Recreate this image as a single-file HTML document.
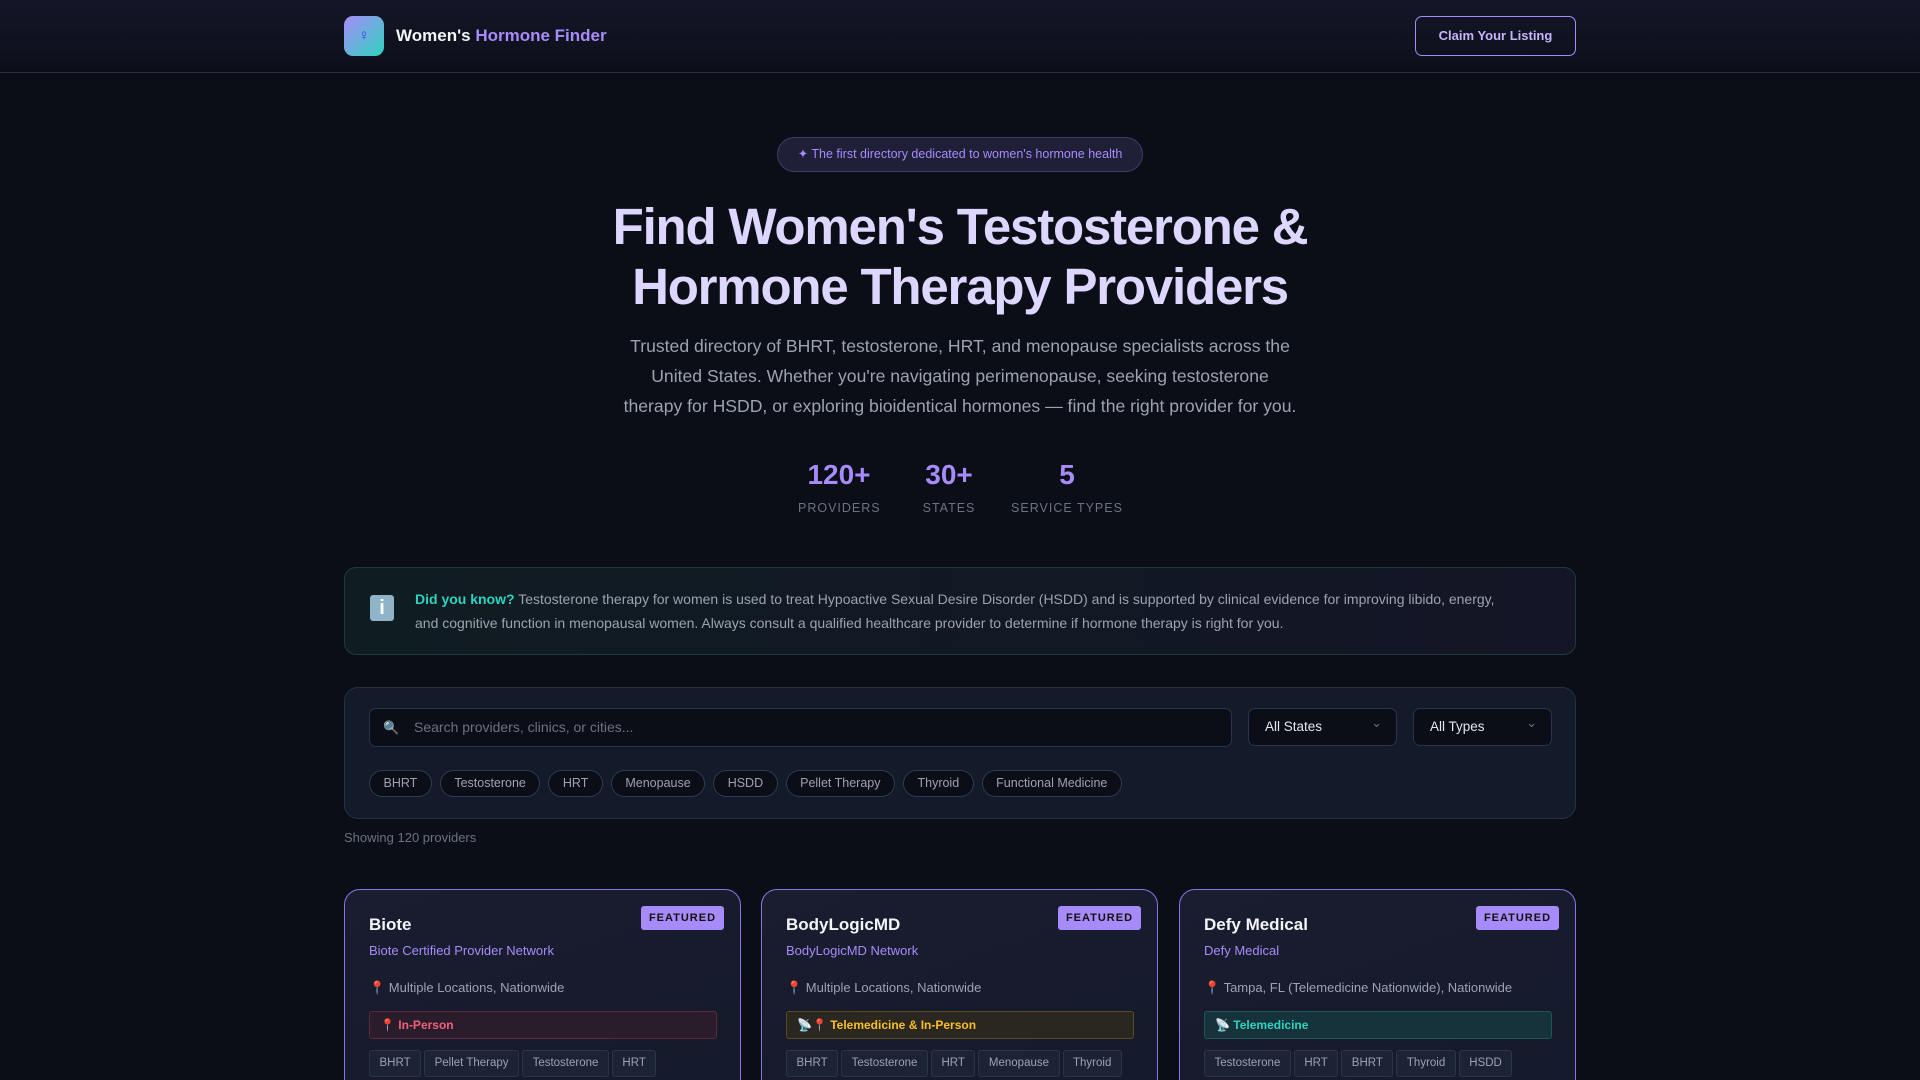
<!DOCTYPE html>
<html><head><meta charset="utf-8">
<style>
*{box-sizing:border-box;margin:0;padding:0}
html,body{width:1920px;height:1080px;overflow:hidden}
body{background:#0b0e17;font-family:"Liberation Sans",sans-serif;color:#e5e7eb;position:relative}
.hdr{height:73px;border-bottom:1px solid #243049;background:linear-gradient(180deg,#141627,#0c0f1a)}
.wrap{width:1232px;margin:0 auto;position:relative}
.logo{position:absolute;left:0;top:16px;width:40px;height:40px;border-radius:9px;background:linear-gradient(135deg,#a78bfa,#2dd4bf);color:#3b3bd8;font-size:15px;text-align:center;line-height:40px}
.brand{position:absolute;left:52px;top:26px;font-size:17px;font-weight:bold;color:#f3f4f6}
.brand span{color:#a78bfa}
.claim{position:absolute;right:0;top:16px;width:161px;height:40px;border:1px solid #a78bfa;border-radius:7px;color:#c4b5fd;font-size:13px;font-weight:bold;text-align:center;line-height:38px}
.badge{position:absolute;left:433px;top:64px;width:366px;height:35px;border:1px solid #3f3a6b;border-radius:18px;background:#1f1f38;color:#a78bfa;font-size:12.5px;text-align:center;line-height:33px}
h1{position:absolute;left:0;width:1232px;top:124px;text-align:center;font-size:51px;line-height:60px;letter-spacing:-1.2px;color:#ddd6fe;font-weight:bold}
.sub{position:absolute;left:266px;width:700px;top:258px;text-align:center;font-size:17.6px;line-height:30px;color:#9ca3af}
.stat{position:absolute;top:386px;text-align:center}
.stat b{display:block;font-size:28px;color:#a78bfa;line-height:32px}
.stat i{display:block;font-style:normal;font-size:12.5px;letter-spacing:1px;color:#6b7280;margin-top:10px}
.info{position:absolute;left:0;top:494px;width:1232px;height:88px;border:1px solid #1d3b3b;border-radius:12px;background:linear-gradient(90deg,#0f1c22,#141526)}
.info .ic{position:absolute;left:25px;top:27px;width:24px;height:26px;background:#8fb3c8;border-radius:3px;color:#fff;font-weight:bold;text-align:center;line-height:26px;font-size:20px}
.info p{position:absolute;left:70px;top:20px;width:1140px;font-size:14px;line-height:23.5px;color:#9ca3af}
.info p b{color:#2dd4bf}
.srch{position:absolute;left:0;top:614px;width:1232px;height:132px;border:1px solid #253048;border-radius:14px;background:#131a2a}
.inp{position:absolute;left:24px;top:20px;width:863px;height:39px;border:1px solid #283350;border-radius:7px;background:#0b0e17;color:#6b7280;font-size:14px;line-height:37px;padding-left:44px}
.inp:before{content:"🔍";position:absolute;left:13px;top:0;font-size:13px}
.sel{position:absolute;top:20px;height:38px;border:1px solid #283350;border-radius:7px;background:#0b0e17;color:#e5e7eb;font-size:13.5px;line-height:36px;padding-left:16px}
.sel:after{content:"⌄";position:absolute;right:14px;top:-4px;color:#6b7280;font-size:13px}
.chips{position:absolute;left:24px;top:82px;white-space:nowrap}
.chips span{display:inline-block;height:27px;line-height:25px;padding:0 13.5px;border:1px solid #2f3a52;border-radius:14px;background:#0b0e17;font-size:12.5px;color:#9ca3af;margin-right:8px}
.showing{position:absolute;left:0;top:757px;font-size:13px;color:#6b7280}
.card{position:absolute;top:816px;width:397px;height:300px;border:1px solid #8b73e6;border-radius:16px;background:linear-gradient(160deg,#1a1c30,#131a2a)}
.card .f{position:absolute;right:16px;top:16px;width:83px;height:24px;background:#a78bfa;border-radius:3px;color:#111;font-size:11px;font-weight:bold;letter-spacing:1px;text-align:center;line-height:24px}
.card h3{position:absolute;left:24px;top:25px;font-size:17px;color:#f3f4f6}
.card .n{position:absolute;left:24px;top:53px;font-size:13px;color:#a78bfa}
.card .l{position:absolute;left:24px;top:90px;font-size:13px;color:#9ca3af}
.card .t{position:absolute;left:24px;top:121px;width:348px;height:28px;border-radius:3px;font-size:12px;font-weight:bold;line-height:26px;padding-left:10px}
.card .tg{position:absolute;left:24px;top:160px;white-space:nowrap}
.card .tg span{display:inline-block;height:27px;line-height:25px;padding:0 9.5px;border:1px solid #2b3448;border-radius:3px;background:#1c2335;font-size:11.5px;color:#9ca3af;margin-right:3px}
</style></head><body>
<div class="hdr"><div class="wrap">
<div class="logo">♀</div>
<div class="brand">Women's <span>Hormone Finder</span></div>
<div class="claim">Claim Your Listing</div>
</div></div>
<div class="wrap">
<div class="badge">✦ The first directory dedicated to women's hormone health</div>
<h1>Find Women's Testosterone &amp;<br>Hormone Therapy Providers</h1>
<div class="sub">Trusted directory of BHRT, testosterone, HRT, and menopause specialists across the<br>United States. Whether you're navigating perimenopause, seeking testosterone<br>therapy for HSDD, or exploring bioidentical hormones — find the right provider for you.</div>
<div class="stat" style="left:454px;width:82px"><b>120+</b><i>PROVIDERS</i></div>
<div class="stat" style="left:574px;width:62px"><b>30+</b><i>STATES</i></div>
<div class="stat" style="left:667px;width:112px"><b>5</b><i>SERVICE TYPES</i></div>
<div class="info"><div class="ic">i</div><p><b>Did you know?</b> Testosterone therapy for women is used to treat Hypoactive Sexual Desire Disorder (HSDD) and is supported by clinical evidence for improving libido, energy,<br>and cognitive function in menopausal women. Always consult a qualified healthcare provider to determine if hormone therapy is right for you.</p></div>
<div class="srch">
<div class="inp">Search providers, clinics, or cities...</div>
<div class="sel" style="left:903px;width:149px">All States</div>
<div class="sel" style="left:1068px;width:139px">All Types</div>
<div class="chips"><span>BHRT</span><span>Testosterone</span><span>HRT</span><span>Menopause</span><span>HSDD</span><span>Pellet Therapy</span><span>Thyroid</span><span>Functional Medicine</span></div>
</div>
<div class="showing">Showing 120 providers</div>
<div class="card" style="left:0"><div class="f">FEATURED</div><h3>Biote</h3><div class="n">Biote Certified Provider Network</div><div class="l">📍 Multiple Locations, Nationwide</div><div class="t" style="background:#2a1c2b;border:1px solid #5a2a3e;color:#f0627a">📍 In-Person</div><div class="tg"><span>BHRT</span><span>Pellet Therapy</span><span>Testosterone</span><span>HRT</span></div></div>
<div class="card" style="left:417px"><div class="f">FEATURED</div><h3>BodyLogicMD</h3><div class="n">BodyLogicMD Network</div><div class="l">📍 Multiple Locations, Nationwide</div><div class="t" style="background:#2a2720;border:1px solid #5a4a20;color:#fbbf24">📡📍 Telemedicine &amp; In-Person</div><div class="tg"><span>BHRT</span><span>Testosterone</span><span>HRT</span><span>Menopause</span><span>Thyroid</span></div></div>
<div class="card" style="left:835px"><div class="f">FEATURED</div><h3>Defy Medical</h3><div class="n">Defy Medical</div><div class="l">📍 Tampa, FL (Telemedicine Nationwide), Nationwide</div><div class="t" style="background:#16323a;border:1px solid #1f5553;color:#2dd4bf">📡 Telemedicine</div><div class="tg"><span>Testosterone</span><span>HRT</span><span>BHRT</span><span>Thyroid</span><span>HSDD</span></div></div>
</div>
</body></html>
